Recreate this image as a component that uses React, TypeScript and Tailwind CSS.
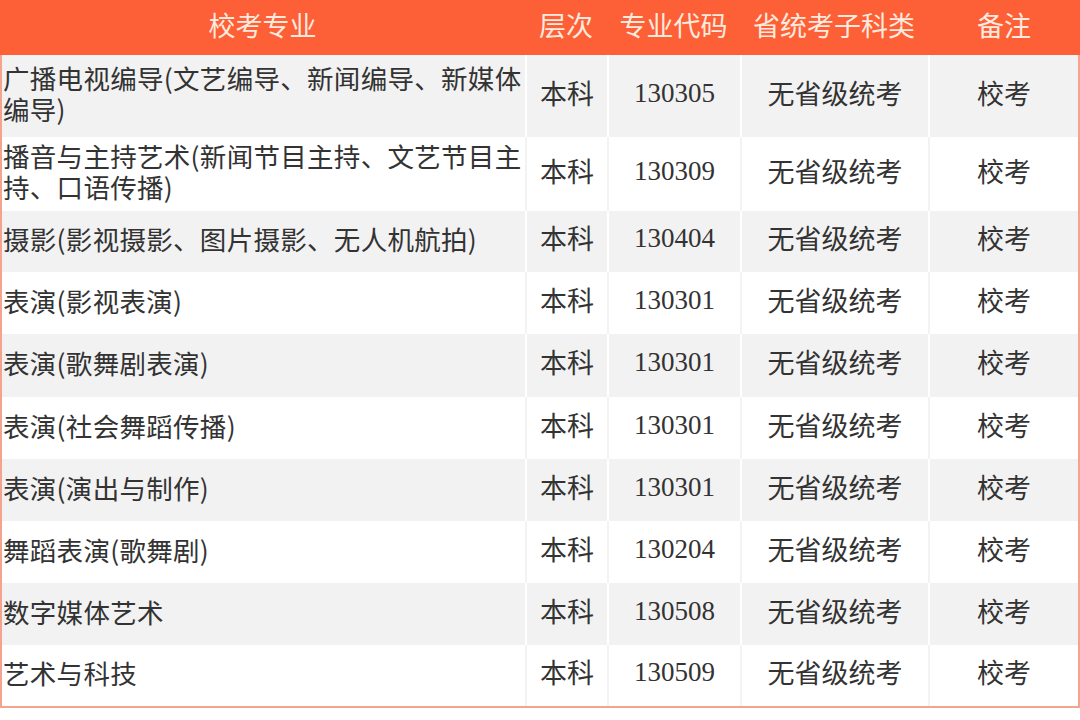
import React from 'react';

interface Row {
  name: string;
  level: string;
  code: string;
  category: string;
  note: string;
  h: string;
}

const rows: Row[] = [
  { name: '广播电视编导(文艺编导、新闻编导、新媒体编导)', level: '本科', code: '130305', category: '无省级统考', note: '校考', h: 'h-[82px]' },
  { name: '播音与主持艺术(新闻节目主持、文艺节目主持、口语传播)', level: '本科', code: '130309', category: '无省级统考', note: '校考', h: 'h-[74px]' },
  { name: '摄影(影视摄影、图片摄影、无人机航拍)', level: '本科', code: '130404', category: '无省级统考', note: '校考', h: 'h-[61px]' },
  { name: '表演(影视表演)', level: '本科', code: '130301', category: '无省级统考', note: '校考', h: 'h-[62px]' },
  { name: '表演(歌舞剧表演)', level: '本科', code: '130301', category: '无省级统考', note: '校考', h: 'h-[63px]' },
  { name: '表演(社会舞蹈传播)', level: '本科', code: '130301', category: '无省级统考', note: '校考', h: 'h-[62px]' },
  { name: '表演(演出与制作)', level: '本科', code: '130301', category: '无省级统考', note: '校考', h: 'h-[62px]' },
  { name: '舞蹈表演(歌舞剧)', level: '本科', code: '130204', category: '无省级统考', note: '校考', h: 'h-[62px]' },
  { name: '数字媒体艺术', level: '本科', code: '130508', category: '无省级统考', note: '校考', h: 'h-[62px]' },
  { name: '艺术与科技', level: '本科', code: '130509', category: '无省级统考', note: '校考', h: 'h-[61px]' },
];

export default function App() {
  return (
    <div className="w-[1080px] h-[720px] bg-white font-['Noto_Sans_CJK_SC',sans-serif]">
      <div className="border-x-2 border-b-2 border-[#f4a48e]">
        <div className="grid grid-cols-[525px_82px_133px_188px_1fr] h-[55px] bg-[#fd5f36] text-[27px] text-[#fdeadf] -mx-[2px] pb-[5px]">
          <div className="flex items-center justify-center">校考专业</div>
          <div className="flex items-center justify-center">层次</div>
          <div className="flex items-center justify-center">专业代码</div>
          <div className="flex items-center justify-center">省统考子科类</div>
          <div className="flex items-center justify-center">备注</div>
        </div>
        {rows.map((r, i) => {
          const gray = i % 2 === 0;
          const line = gray ? 'border-r-2 border-white' : 'border-r-2 border-[#f3f3f3]';
          return (
            <div key={i} className={`grid grid-cols-[525px_82px_133px_188px_1fr] ${r.h} ${gray ? 'bg-[#f2f2f2]' : 'bg-white'} text-[27px] text-[#333333]`}>
              <div className={`flex items-center pl-[1px] pb-[6px] text-[26.5px] tracking-[0.3px] leading-[31px] ${line}`}>{r.name}</div>
              <div className={`flex items-center justify-center pb-[6px] ${line}`}>{r.level}</div>
              <div className={`flex items-center justify-center pb-[6px] font-['Liberation_Serif',serif] ${line}`}>{r.code}</div>
              <div className={`flex items-center justify-center pb-[6px] ${line}`}>{r.category}</div>
              <div className="flex items-center justify-center pb-[6px]">{r.note}</div>
            </div>
          );
        })}
      </div>
    </div>
  );
}
